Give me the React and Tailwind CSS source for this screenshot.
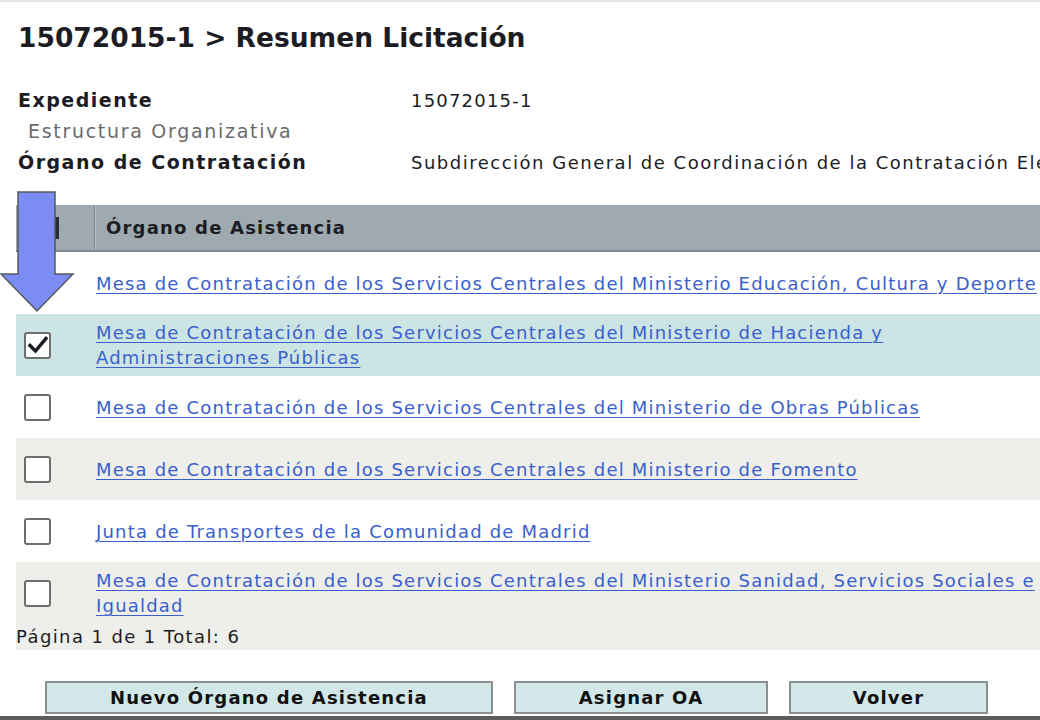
import React from 'react';

const rows = [
  { lines: ['Mesa de Contratación de los Servicios Centrales del Ministerio Educación, Cultura y Deporte'], checked: false, bg: 'bg-white' },
  { lines: ['Mesa de Contratación de los Servicios Centrales del Ministerio de Hacienda y', 'Administraciones Públicas'], checked: true, bg: 'bg-[#cce4e4]' },
  { lines: ['Mesa de Contratación de los Servicios Centrales del Ministerio de Obras Públicas'], checked: false, bg: 'bg-white' },
  { lines: ['Mesa de Contratación de los Servicios Centrales del Ministerio de Fomento'], checked: false, bg: 'bg-[#eeeeea]' },
  { lines: ['Junta de Transportes de la Comunidad de Madrid'], checked: false, bg: 'bg-white' },
  { lines: ['Mesa de Contratación de los Servicios Centrales del Ministerio Sanidad, Servicios Sociales e', 'Igualdad'], checked: false, bg: 'bg-[#eeeeea]' },
];

const Checkbox = ({ checked }) => (
  <div className="w-[27px] h-[27px] border-2 border-[#6e6e6e] rounded-[3px] bg-white flex items-center justify-center">
    {checked && (
      <svg width="20" height="18" viewBox="0 0 20 18">
        <path d="M2 9.5 L7.5 15 L18 2.5" fill="none" stroke="#1b1b22" strokeWidth="3.4" strokeLinecap="square" />
      </svg>
    )}
  </div>
);

const App = () => {
  return (
    <div className="relative w-[1040px] h-[720px] overflow-hidden bg-white text-[#1c1c24] font-['DejaVu_Sans',sans-serif] text-[18px] leading-[25px] tracking-[1.2px]">
      <div className="h-[2px] bg-[#e6e6e6]" />

      <h1 className="pl-[18px] pt-[21px] text-[26.5px] leading-[30px] font-bold tracking-normal whitespace-nowrap">
        15072015-1 &gt; Resumen Licitación
      </h1>

      <div className="mt-[35px] pl-[18px] grid grid-cols-[393px_1fr] items-center whitespace-nowrap">
        <div className="font-bold text-[19px] tracking-[1.5px] h-[31px]">Expediente</div>
        <div className="h-[31px]">15072015-1</div>
        <div className="pl-[10px] text-[#6a6a6a] text-[19px] tracking-[1.7px] h-[31px] col-span-2">Estructura Organizativa</div>
        <div className="font-bold text-[19px] tracking-[1.5px] h-[31px]">Órgano de Contratación</div>
        <div className="h-[31px] tracking-[1.5px] overflow-hidden">Subdirección General de Coordinación de la Contratación Electrónica</div>
      </div>

      <div className="mt-[24px] ml-[16px] w-[1100px]">
        <div className="flex h-[47px] bg-[#9eaab0] border-b-2 border-[#7d898f]">
          <div className="w-[78px] flex items-center pl-[31px]">
            <div className="w-[12px] h-[22px] bg-[#2a2e33]" />
          </div>
          <div className="w-[2px] bg-[#7b878d] border-r border-[#b3bdc2]" />
          <div className="flex items-center pl-[10px] font-bold">Órgano de Asistencia</div>
        </div>

        {rows.map((row, i) => (
          <div key={i} className={`flex items-center h-[62px] ${row.bg}`}>
            <div className="w-[80px] pl-[8px] shrink-0">
              <Checkbox checked={row.checked} />
            </div>
            <div className="whitespace-nowrap text-[#3a5fcc]">
              {row.lines.map((l, j) => (
                <div key={j}>
                  <a href="#" className="underline decoration-1 underline-offset-[3px]">{l}</a>
                </div>
              ))}
            </div>
          </div>
        ))}

        <div className="h-[26px] bg-[#eeeeea] leading-[26px] tracking-[1.4px]">Página 1 de 1 Total: 6</div>
      </div>

      <div className="mt-[31px] ml-[45px] flex gap-[21px] font-bold">
        <button className="w-[448px] h-[33px] bg-[#d2e7e7] border-2 border-[#8a8f90] text-[#111] tracking-[1.2px]">Nuevo Órgano de Asistencia</button>
        <button className="w-[254px] h-[33px] bg-[#d2e7e7] border-2 border-[#8a8f90] text-[#111] tracking-[1.2px]">Asignar OA</button>
        <button className="w-[199px] h-[33px] bg-[#d2e7e7] border-2 border-[#8a8f90] text-[#111] tracking-[1.2px]">Volver</button>
      </div>

      <div className="absolute left-0 bottom-0 w-full h-[4px] bg-[#5c5c5c]" />

      <svg className="absolute left-0 top-[190px]" width="76" height="124" viewBox="0 0 76 124">
        <path d="M18 2 L55 2 L55 84 L73 84 L37 121 L1 84 L18 84 Z" fill="#7b8cf2" stroke="#55595f" strokeWidth="1.5" strokeLinejoin="miter" />
      </svg>
    </div>
  );
};

export default App;
